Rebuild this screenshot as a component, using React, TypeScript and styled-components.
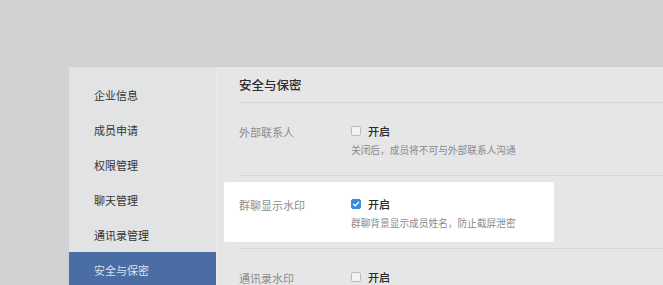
import React, { ReactElement } from 'react';
import styled, { createGlobalStyle } from 'styled-components';

const GlobalStyle = createGlobalStyle`
  html, body {
    margin: 0;
    padding: 0;
    background: #d1d2d4;
    overflow: hidden;
    font-family: "Noto Sans CJK SC", "Noto Sans", sans-serif;
  }
`;

const Page = styled.div`
  width: 663px;
  height: 285px;
  padding: 67px 0 0 69px;
  box-sizing: border-box;
  overflow: hidden;
`;

const Panel = styled.div`
  width: 700px;
  height: 260px;
  display: flex;
  box-shadow: 0 -1px 2px rgba(0, 0, 0, 0.03);
`;

const Sidebar = styled.ul`
  width: 147px;
  flex-shrink: 0;
  margin: 0;
  padding: 10px 0 0;
  list-style: none;
  background: #e2e3e5;
`;

const NavItem = styled.li<{ $active?: boolean }>`
  height: 35px;
  display: flex;
  align-items: center;
  padding-left: 25px;
  font-size: 11px;
  color: ${(p) => (p.$active ? '#d9e2ef' : '#333')};
  background: ${(p) => (p.$active ? '#4a6ea4' : 'transparent')};
`;

const Content = styled.div`
  flex: 1;
  padding-left: 22px;
  background: #e6e6e6;
  border-left: 1px solid #ebebeb;
`;

const Title = styled.div`
  height: 35px;
  display: flex;
  align-items: center;
  font-size: 12.5px;
  font-weight: 500;
  color: #2c2c2c;
  border-bottom: 1px solid #d6d6d6;
`;

const Row = styled.div`
  padding: 6px 0;
  border-bottom: 1px solid #d6d6d6;
`;

const Card = styled.div<{ $highlight?: boolean }>`
  width: 330px;
  height: 60px;
  margin-left: -15px;
  padding: 15px 15px 0;
  box-sizing: border-box;
  display: flex;
  border-radius: 2px;
  background: ${(p) => (p.$highlight ? '#ffffff' : 'transparent')};
`;

const Label = styled.div`
  width: 112px;
  flex-shrink: 0;
  padding-top: 1px;
  font-size: 11px;
  line-height: 14px;
  color: #8c8c8c;
`;

const Options = styled.div`
  display: flex;
  flex-direction: column;
`;

const Toggle = styled.label`
  display: flex;
  align-items: center;
  gap: 7px;
  height: 14px;
  font-size: 11px;
  font-weight: 500;
  color: #2a2a2a;
`;

const Box = styled.span<{ $checked?: boolean }>`
  width: 10px;
  height: 10px;
  box-sizing: border-box;
  border-radius: 2px;
  display: flex;
  align-items: center;
  justify-content: center;
  background: ${(p) => (p.$checked ? '#3c86e4' : '#f4f4f4')};
  border: 1px solid ${(p) => (p.$checked ? '#3c86e4' : '#bdbdbd')};
`;

const Hint = styled.div`
  margin-top: 6px;
  font-size: 9.7px;
  line-height: 12px;
  color: #8a8a8a;
  white-space: nowrap;
`;

const Check = (): ReactElement => (
  <svg width="8" height="8" viewBox="0 0 8 8">
    <path d="M1.5 4.2 L3.3 5.8 L6.6 2.2" fill="none" stroke="#fff" strokeWidth="1.3" strokeLinecap="round" strokeLinejoin="round" />
  </svg>
);

const nav = ['企业信息', '成员申请', '权限管理', '聊天管理', '通讯录管理', '安全与保密'];

const settings = [
  { label: '外部联系人', checked: false, hint: '关闭后，成员将不可与外部联系人沟通' },
  { label: '群聊显示水印', checked: true, hint: '群聊背景显示成员姓名，防止截屏泄密', highlight: true },
  { label: '通讯录水印', checked: false, hint: '通讯录显示成员姓名，防止截屏泄密' },
];

const App = (): ReactElement => {
  return (
    <Page>
      <GlobalStyle />
      <Panel>
        <Sidebar>
          {nav.map((n) => (
            <NavItem key={n} $active={n === '安全与保密'}>
              {n}
            </NavItem>
          ))}
        </Sidebar>
        <Content>
          <Title>安全与保密</Title>
          {settings.map((s) => (
            <Row key={s.label}>
              <Card $highlight={s.highlight}>
                <Label>{s.label}</Label>
                <Options>
                  <Toggle>
                    <Box $checked={s.checked}>{s.checked && <Check />}</Box>
                    开启
                  </Toggle>
                  <Hint>{s.hint}</Hint>
                </Options>
              </Card>
            </Row>
          ))}
        </Content>
      </Panel>
    </Page>
  );
};

export default App;
